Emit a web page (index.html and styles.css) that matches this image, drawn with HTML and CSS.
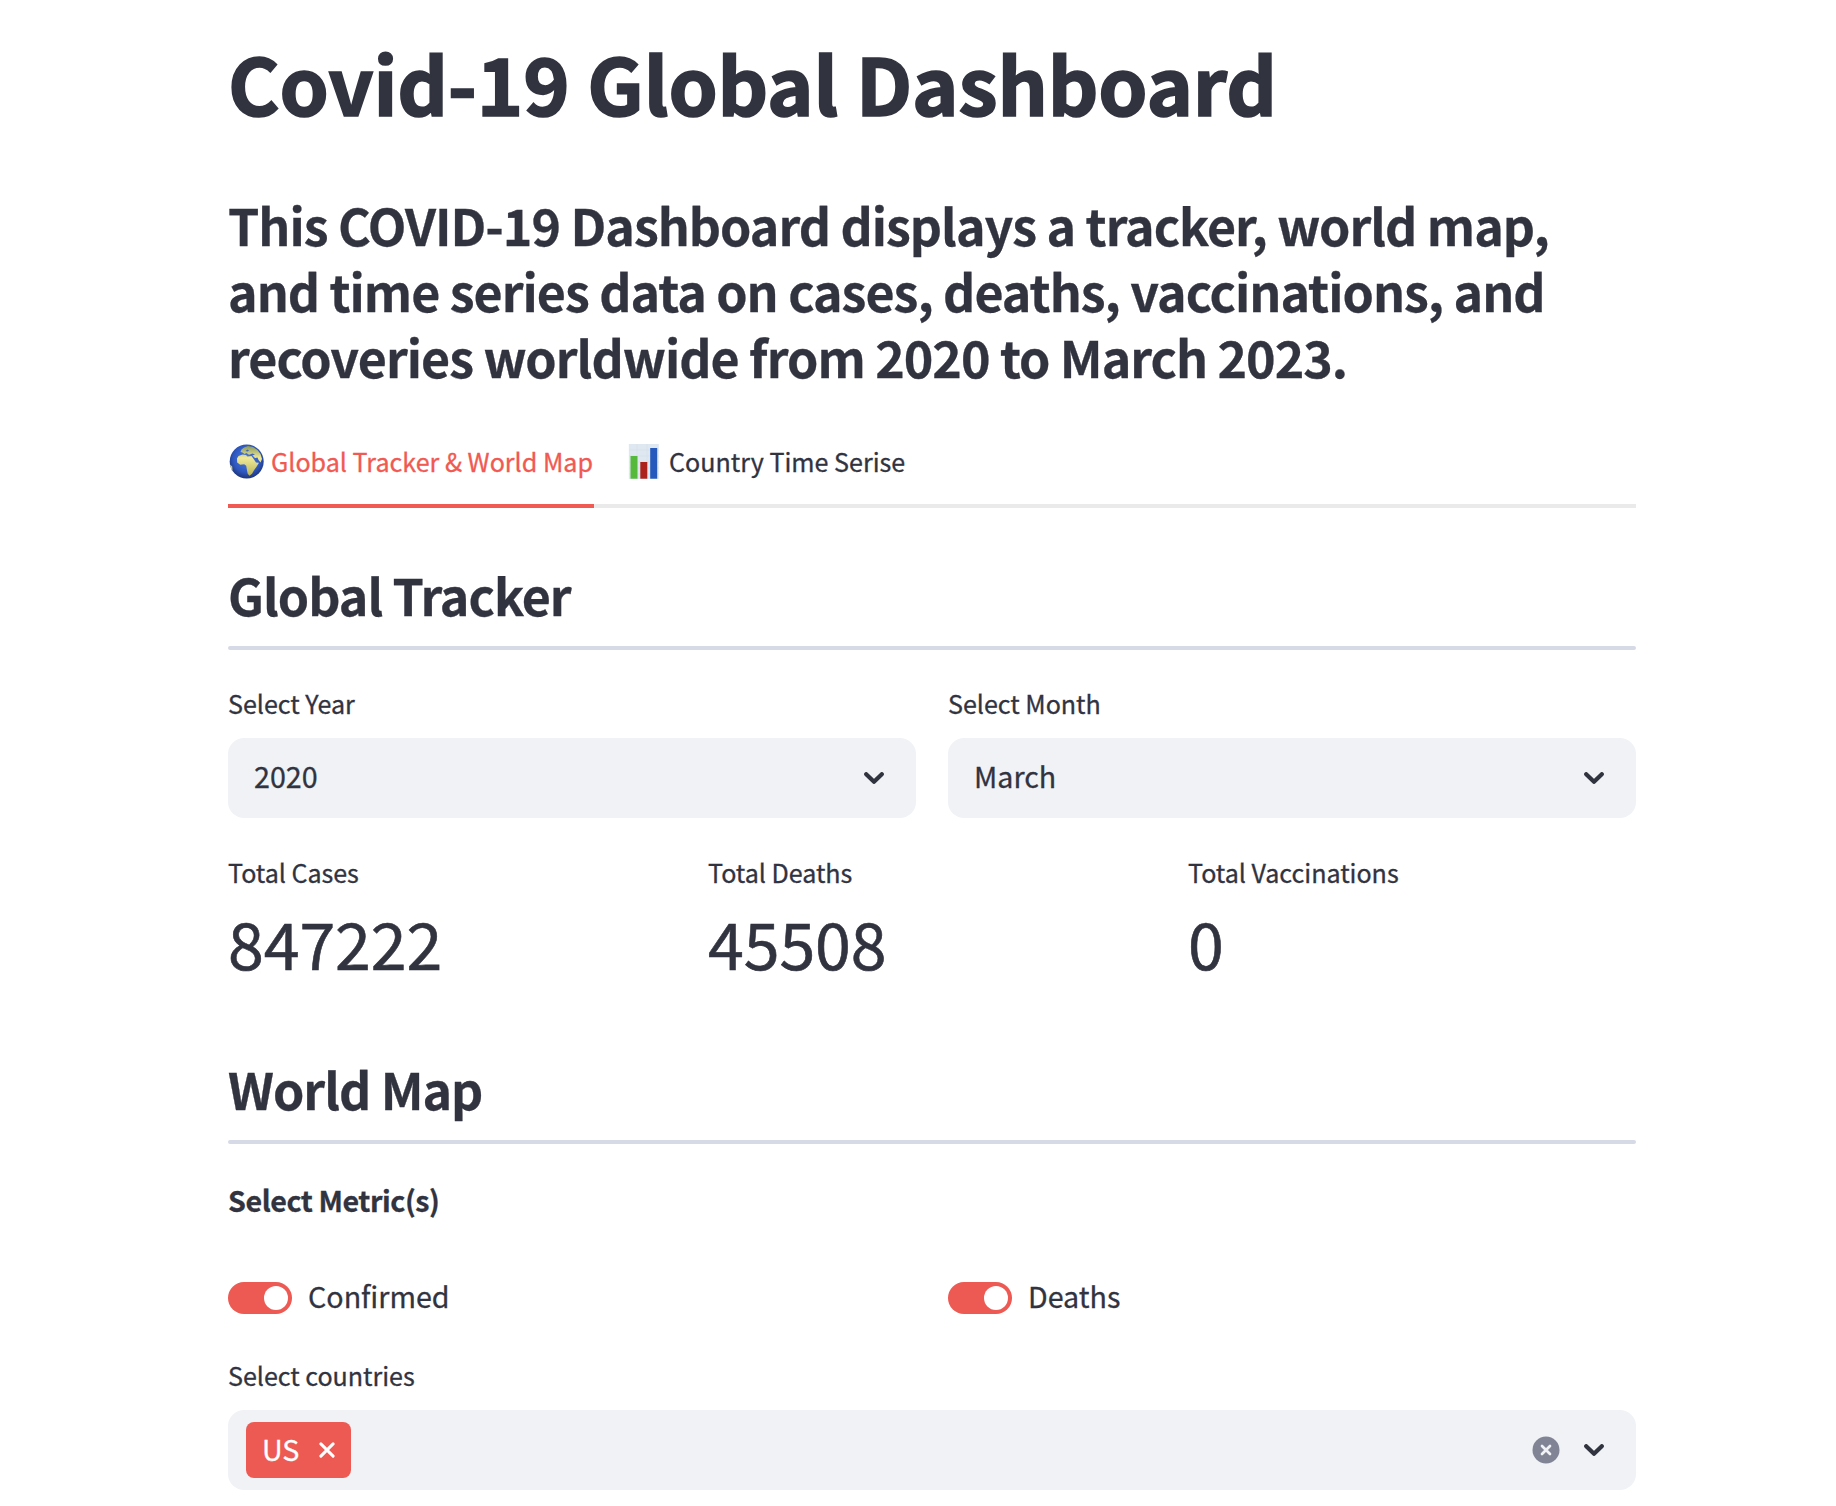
FILE: index.html
```html
<!DOCTYPE html>
<html lang="en">
<head>
<meta charset="utf-8">
<title>Covid-19 Global Dashboard</title>
<link rel="stylesheet" href="styles.css">
</head>
<body>
<main class="page">
  <h1 class="title">Covid-19 Global Dashboard</h1>
  <h3 class="heading intro">This COVID-19 Dashboard displays a tracker, world map,<br>and time series data on cases, deaths, vaccinations, and<br>recoveries worldwide from 2020 to March 2023.</h3>

  <nav class="tabs">
    <a class="tab tab-active">
      <svg class="emoji" width="38" height="38" viewBox="0 0 38 38" aria-hidden="true">
        <defs>
          <radialGradient id="sea" cx=".5" cy=".42" r=".6"><stop offset="0" stop-color="#4a7ce0"/><stop offset=".65" stop-color="#2e58c0"/><stop offset="1" stop-color="#1c3174"/></radialGradient>
          <linearGradient id="land" x1="0" y1="0" x2="0" y2="1"><stop offset="0" stop-color="#8a9a58"/><stop offset=".4" stop-color="#f0e99a"/><stop offset="1" stop-color="#b9b356"/></linearGradient>
        </defs>
        <circle cx="18.700" cy="18.500" r="17" fill="url(#sea)"/>
        <path fill="url(#land)" d="M9 15.500l1.500-2.500 4-1.500 3.500.5 1.500 1.500 4-.5 2.500 3.500 2 3 3 .3-2.500 4-2.500 3.500-2 3.500-2.500 2-1.800-2-.8-4-.7-4-2-1.500-4 .5-3-2.300zM12.500 9l1-2.500 2.500-2 4-1.500 5 1 4.500 3 3 4 1.500 5-1.500 3.500-2-2.500-1-2.500-2.500.5-3-3-3.500-.5-2-1.500-2 1-2-1.500zM2 21.500l2.200 2 .3 3.500-1 .5z"/>
        <path fill="#3f65ba" d="M17.500 8l2-1.500 1.500 1-1.500 1zM21.500 11.500l3-1 2.500 1-2.500 1z"/>
      </svg>
      <span class="tab-text">Global Tracker &amp; World Map</span>
    </a>
    <a class="tab">
      <svg class="emoji" width="38" height="38" viewBox="0 0 38 38" aria-hidden="true">
        <rect x="2.800" y="1" width="30" height="35" fill="#dfe8f0"/>
        <path d="M3 7h30M3 13h30M3 19h30M3 25h30M3 31h30M11 1v35M21 1v35" stroke="#d3dee8" stroke-width=".5" fill="none"/>
        <rect x="4.500" y="13" width="7" height="22.700" fill="#55b93b"/>
        <rect x="14.300" y="19" width="7" height="16.700" fill="#ac211b"/>
        <rect x="24.200" y="5" width="7" height="30.700" fill="#2559bb"/>
      </svg>
      <span class="tab-text">Country Time Serise</span>
    </a>
  </nav>

  <section class="section section-tracker">
    <h2 class="heading">Global Tracker</h2>
    <hr class="divider">
    <div class="row controls">
      <div class="col">
        <div class="label">Select Year</div>
        <div class="select">
          <span class="select-value">2020</span>
          <svg class="chevron" width="20" height="12" viewBox="0 0 20 12"><path d="M2.200 2.200L10 9.800l7.800-7.600"/></svg>
        </div>
      </div>
      <div class="col">
        <div class="label">Select Month</div>
        <div class="select">
          <span class="select-value">March</span>
          <svg class="chevron" width="20" height="12" viewBox="0 0 20 12"><path d="M2.200 2.200L10 9.800l7.800-7.600"/></svg>
        </div>
      </div>
    </div>
    <div class="row metrics">
      <div class="col"><div class="label">Total Cases</div><div class="metric">847222</div></div>
      <div class="col"><div class="label">Total Deaths</div><div class="metric">45508</div></div>
      <div class="col"><div class="label">Total Vaccinations</div><div class="metric">0</div></div>
    </div>
  </section>

  <section class="section section-map">
    <h2 class="heading">World Map</h2>
    <hr class="divider">
    <p class="metric-prompt">Select Metric(s)</p>
    <div class="row toggles">
      <div class="col toggle-row"><span class="toggle"></span><span class="toggle-text">Confirmed</span></div>
      <div class="col toggle-row"><span class="toggle"></span><span class="toggle-text">Deaths</span></div>
    </div>
    <div class="label">Select countries</div>
    <div class="select multiselect">
      <span class="tag"><span class="tag-text">US</span>
        <svg width="16" height="16" viewBox="0 0 16 16"><path d="M1.900 1.900l12.200 12.200M14.100 1.900L1.900 14.100" stroke="#fff" stroke-width="3" stroke-linecap="round"/></svg>
      </span>
      <svg class="clear" width="28" height="28" viewBox="0 0 28 28"><circle cx="14" cy="14" r="13.500" fill="#808495"/><path d="M10 10l8 8M18 10l-8 8" stroke="#f0f2f6" stroke-width="2.700" stroke-linecap="round"/></svg>
      <svg class="chevron" width="20" height="12" viewBox="0 0 20 12"><path d="M2.200 2.200L10 9.800l7.800-7.600"/></svg>
    </div>
  </section>
</main>
</body>
</html>
```
FILE: styles.css
```css
* { box-sizing: border-box; }

body {
  margin: 0;
  background: #fff;
  color: #31333f;
  font-family: "Noto Sans CJK SC", sans-serif;
  -webkit-text-stroke: 0.3px currentColor;
  overflow: hidden;
}

.page {
  width: 1408px;
  margin-left: 228px;
  padding-top: 29px;
}

h1, h2, h3, p { margin: 0; }

.title {
  font-size: 78.8px;
  line-height: 106px;
  font-weight: 700;
  letter-spacing: -0.13px;
  -webkit-text-stroke-width: 1.7px;
  white-space: nowrap;
}

.heading {
  font-size: 50.15px;
  line-height: 66px;
  font-weight: 600;
  letter-spacing: -0.99px;
  white-space: nowrap;
}

.intro { margin-top: 56px; }

.tabs {
  display: flex;
  gap: 32px;
  margin-top: 32px;
  height: 87px;
  box-shadow: inset 0 -4px #eaeaeb;
}

.tab {
  display: flex;
  padding: 20px 0 23px;
  border-bottom: 4px solid transparent;
}

.tab-active {
  width: 366px;
  color: #f05a53;
  border-bottom-color: #f05a53;
}

.emoji { flex: none; margin-top: 2px; }

.tab-text {
  margin-left: 5px;
  font-size: 25.1px;
  line-height: 40px;
  white-space: nowrap;
}

.section-tracker { padding-top: 53px; }
.section-map { padding-top: 69px; }

.divider {
  height: 4px;
  margin: 19px 0 0;
  border: 0;
  border-radius: 2px;
  background: #d6dae6;
}

.row { display: flex; gap: 32px; }
.col { flex: 1 1 0; min-width: 0; }

.controls { margin-top: 33px; }
.metrics { margin-top: 34px; }

.label {
  font-size: 25.1px;
  line-height: 40px;
  letter-spacing: -0.03px;
}

.select {
  display: flex;
  align-items: center;
  height: 80px;
  margin-top: 15px;
  padding: 0 32px 0 26px;
  border-radius: 16px;
  background: #f0f2f6;
}

.select-value {
  flex: 1;
  padding-bottom: 5px;
  font-size: 28.65px;
  line-height: 75px;
}

.chevron {
  fill: none;
  stroke: #31333f;
  stroke-width: 4.2px;
  stroke-linecap: round;
  stroke-linejoin: round;
}

.metric {
  margin-top: 6px;
  font-size: 64.5px;
  line-height: 88px;
  letter-spacing: -0.1px;
  -webkit-text-stroke-width: 0.6px;
}

.metric-prompt {
  margin-top: 32px;
  font-size: 28.65px;
  line-height: 48px;
  font-weight: 600;
  letter-spacing: -0.43px;
}

.toggles { margin-top: 58px; margin-bottom: 41px; }

.toggle-row { display: flex; height: 32px; }

.toggle {
  display: flex;
  justify-content: flex-end;
  width: 64px;
  height: 32px;
  padding: 4px;
  border-radius: 16px;
  background: #ed5a53;
}

.toggle::after {
  content: "";
  width: 24px;
  height: 24px;
  border-radius: 50%;
  background: #fff;
}

.toggle-text {
  margin-left: 16px;
  font-size: 28.65px;
  line-height: 27px;
}

.multiselect { padding-left: 18px; }

.tag {
  display: flex;
  align-items: center;
  justify-content: space-between;
  width: 105px;
  height: 56px;
  margin-right: auto;
  padding: 0 16px 0 16px;
  border-radius: 8px;
  background: #ed5a53;
  color: #fff;
}

.tag-text {
  padding-bottom: 2px;
  font-size: 28.65px;
  line-height: 52px;
}

.clear { margin-right: 24px; }
```
